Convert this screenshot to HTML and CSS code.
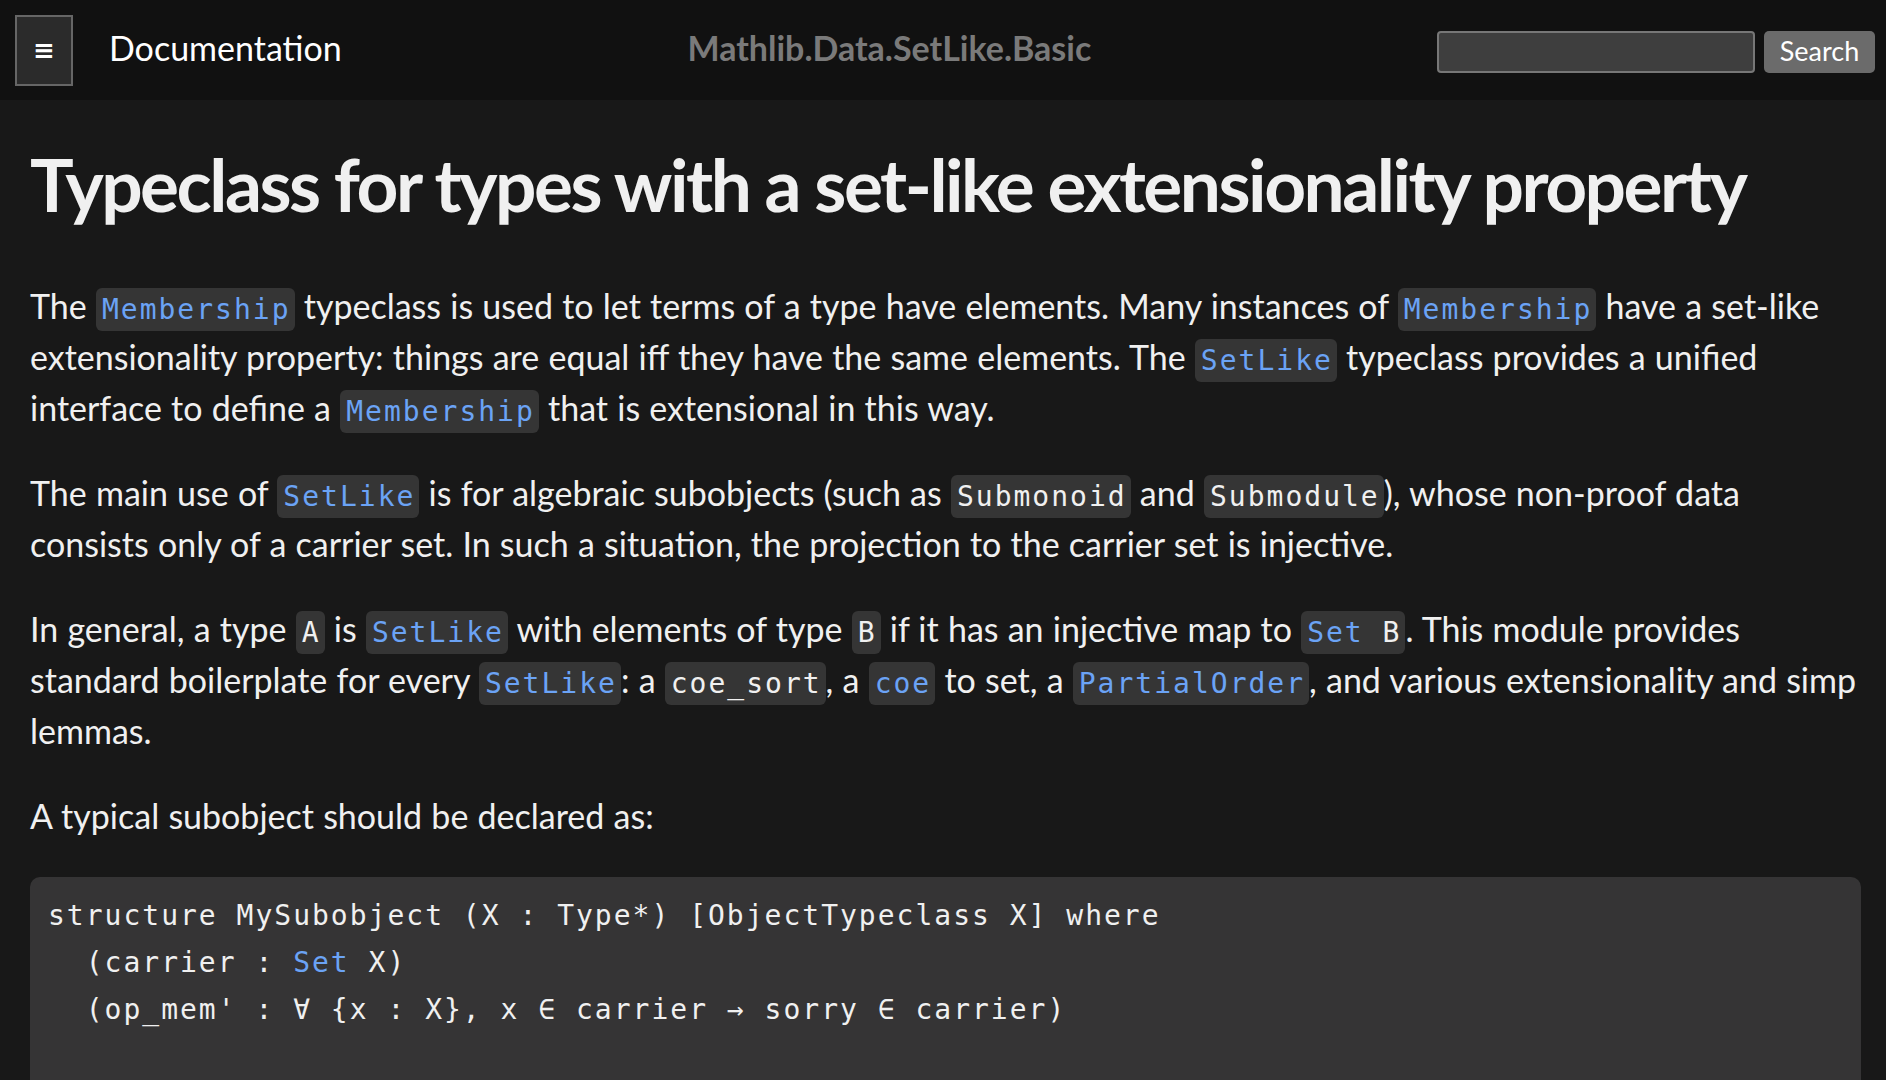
FILE: index.html
```html
<!DOCTYPE html>
<html lang="en">
<head>
<meta charset="utf-8">
<title>Mathlib.Data.SetLike.Basic</title>
<link rel="stylesheet" href="styles.css">
</head>
<body>
<header class="topbar">
  <button class="menu-btn">≡</button>
  <span class="brand">Documentation</span>
  <span class="module-name">Mathlib.Data.SetLike.Basic</span>
  <form class="search">
    <input class="search-input" type="text">
    <button class="search-btn" type="button">Search</button>
  </form>
</header>
<main class="content">
  <h1 class="title">Typeclass for types with a set-like extensionality property</h1>
  <p>The <code class="link">Membership</code> typeclass is used to let terms of a type have elements. Many instances of <code class="link">Membership</code> have a set-like extensionality property: things are equal iff they have the same elements. The <code class="link">SetLike</code> typeclass provides a unified interface to define a <code class="link">Membership</code> that is extensional in this way.</p>
  <p>The main use of <code class="link">SetLike</code> is for algebraic subobjects (such as <code>Submonoid</code> and <code>Submodule</code>), whose non-proof data consists only of a carrier set. In such a situation, the projection to the carrier set is injective.</p>
  <p>In general, a type <code>A</code> is <code class="link">SetLike</code> with elements of type <code>B</code> if it has an injective map to <code><span class="kw">Set</span> B</code>. This module provides standard boilerplate for every <code class="link">SetLike</code>: a <code>coe_sort</code>, a <code class="link">coe</code> to set, a <code class="link">PartialOrder</code>, and various extensionality and simp lemmas.</p>
  <p>A typical subobject should be declared as:</p>
  <pre class="codeblock">structure MySubobject (X : Type*) [ObjectTypeclass X] where
  (carrier : <span class="kw">Set</span> X)
  (op_mem' : ∀ {x : X}, x ∈ carrier → sorry ∈ carrier)

</pre>
</main>
</body>
</html>
```
FILE: styles.css
```css
html, body {
  margin: 0;
  padding: 0;
}
body {
  background: #181818;
  color: #f0f0f0;
  font-family: Lato, "Open Sans", sans-serif;
  overflow: hidden;
}
.topbar {
  height: 100px;
  background: #111111;
  display: flex;
  align-items: center;
  padding: 0 11px 0 15px;
  box-sizing: border-box;
}
.menu-btn {
  width: 58px;
  height: 71px;
  border: 2px solid #666;
  background: #2b2b2b;
  color: #fff;
  font-family: "DejaVu Sans", sans-serif;
  font-size: 26px;
  font-weight: bold;
  padding: 0;
  margin: 0;
}
.brand {
  margin-left: 36px;
  font-size: 34px;
  color: #fff;
  padding-bottom: 6px;
}
.module-name {
  flex: 1;
  text-align: center;
  font-size: 34px;
  font-weight: bold;
  color: #7a7a7a;
  padding-bottom: 6px;
}
.search {
  display: flex;
  align-items: center;
  margin: 4px 0 0;
}
.search-input {
  width: 318px;
  height: 42px;
  box-sizing: border-box;
  border: 2px solid #777;
  border-radius: 4px;
  background: #3e3e3e;
  margin: 0;
}
.search-btn {
  margin-left: 9px;
  width: 111px;
  height: 42px;
  border: none;
  border-radius: 5px;
  background: #6b6b6b;
  color: #fff;
  font-family: Lato, sans-serif;
  font-size: 27px;
  padding: 0 0 3px;
}
.content {
  padding: 0 25px 0 30px;
}
.title {
  font-size: 73px;
  font-weight: bold;
  letter-spacing: -2.5px;
  line-height: 86px;
  margin: 41px 0 53px;
  color: #f0f0f0;
}
p {
  font-size: 34px;
  line-height: 51px;
  margin: 34px 0;
  word-spacing: 0.5px;
}
code {
  font-family: "DejaVu Sans Mono", monospace;
  font-size: 28px;
  letter-spacing: 2px;
  word-spacing: 0;
  line-height: 1;
  background: #353535;
  border-radius: 6px;
  padding: 5px 4px 5px 6px;
  color: #f0f0f0;
}
code.link, .kw {
  color: #6ba3f5;
}
.codeblock {
  margin: 36px 0 0;
  background: #353435;
  border-radius: 10px;
  padding: 15px 18px 40px;
  font-family: "DejaVu Sans Mono", monospace;
  font-size: 28px;
  letter-spacing: 2px;
  line-height: 47px;
  color: #f0f0f0;
}
```
